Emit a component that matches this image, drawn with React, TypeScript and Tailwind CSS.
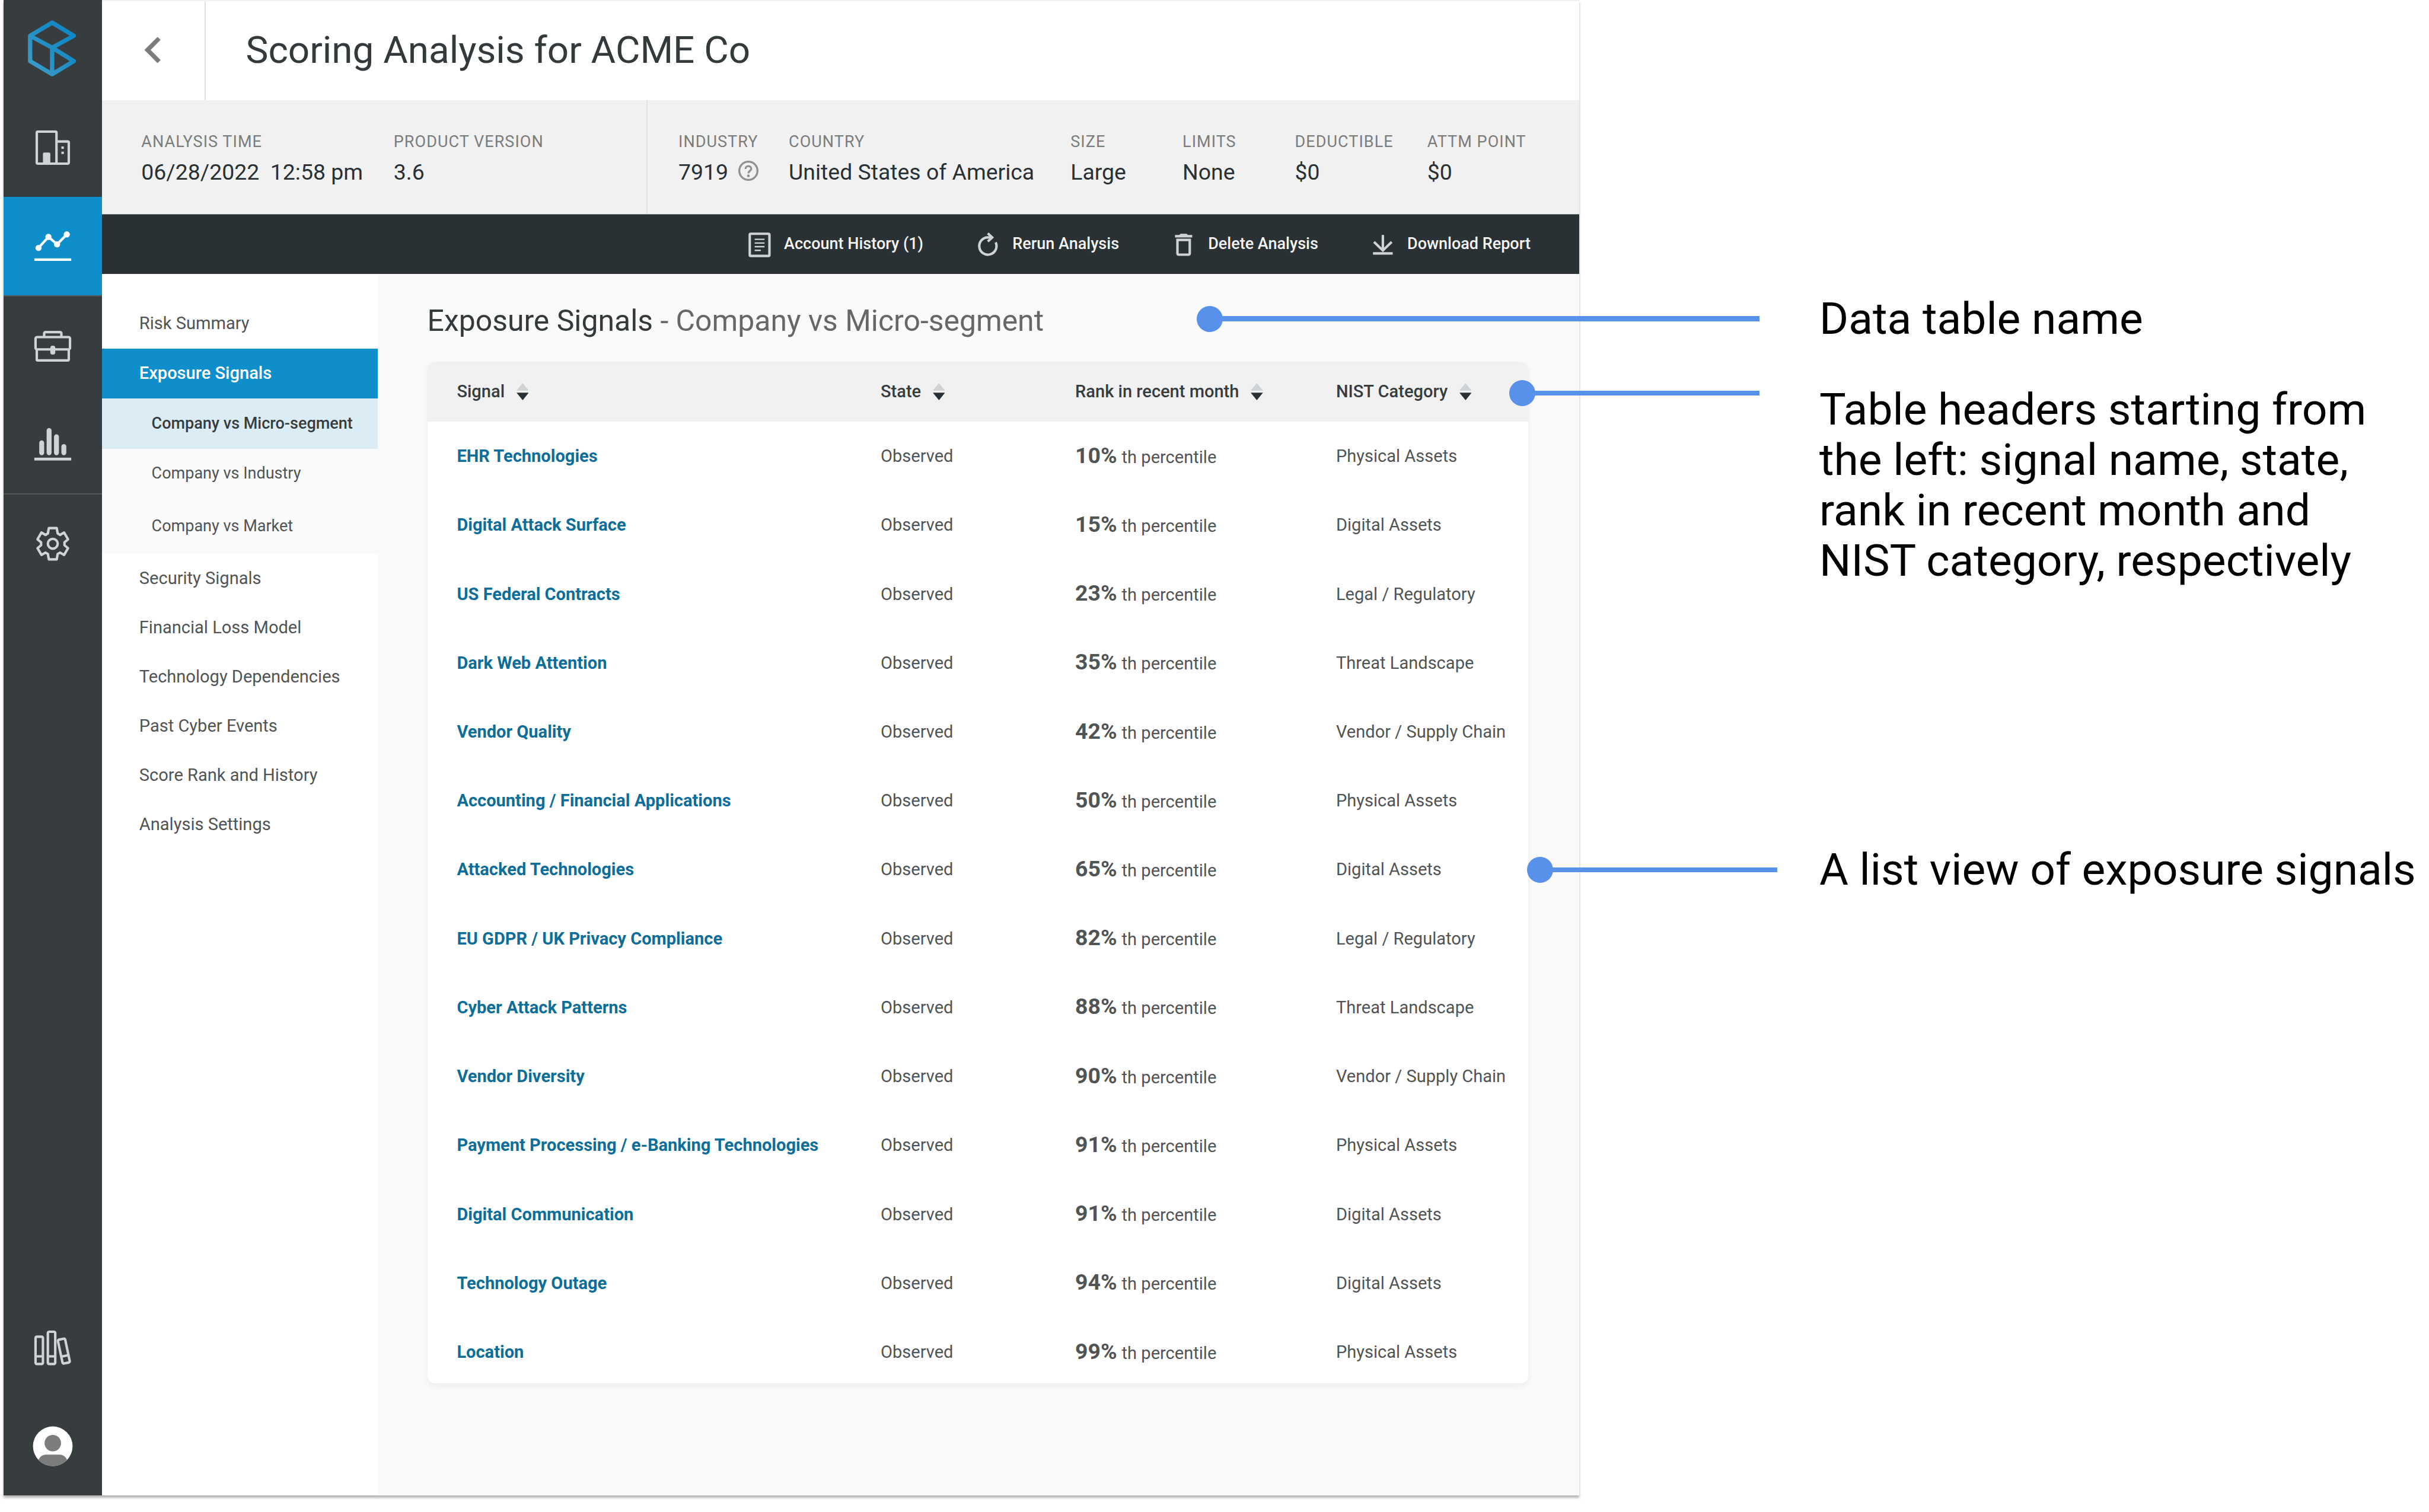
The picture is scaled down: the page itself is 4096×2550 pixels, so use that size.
import type { ReactNode } from "react";

const facts = [
  { label: "INDUSTRY", value: "7919", width: "w-[186.1px]", help: true },
  { label: "COUNTRY", value: "United States of America", width: "w-[475.2px]" },
  { label: "SIZE", value: "Large", width: "w-[188.8px]" },
  { label: "LIMITS", value: "None", width: "w-[189.5px]" },
  { label: "DEDUCTIBLE", value: "$0", width: "w-[223.2px]" },
  { label: "ATTM POINT", value: "$0", width: "w-[200px]" },
];

const signals = [
  ["EHR Technologies", "10%", "Physical Assets"],
  ["Digital Attack Surface", "15%", "Digital Assets"],
  ["US Federal Contracts", "23%", "Legal / Regulatory"],
  ["Dark Web Attention", "35%", "Threat Landscape"],
  ["Vendor Quality", "42%", "Vendor / Supply Chain"],
  ["Accounting / Financial Applications", "50%", "Physical Assets"],
  ["Attacked Technologies", "65%", "Digital Assets"],
  ["EU GDPR / UK Privacy Compliance", "82%", "Legal / Regulatory"],
  ["Cyber Attack Patterns", "88%", "Threat Landscape"],
  ["Vendor Diversity", "90%", "Vendor / Supply Chain"],
  ["Payment Processing / e-Banking Technologies", "91%", "Physical Assets"],
  ["Digital Communication", "91%", "Digital Assets"],
  ["Technology Outage", "94%", "Digital Assets"],
  ["Location", "99%", "Physical Assets"],
];

const moreSections = [
  "Security Signals",
  "Financial Loss Model",
  "Technology Dependencies",
  "Past Cyber Events",
  "Score Rank and History",
  "Analysis Settings",
];

const RailItem = ({ active, children }: { active?: boolean; children: ReactNode }) => (
  <div
    className={`h-[166.06px] shrink-0 ${active ? "bg-[#0e8fcc] text-white" : "text-[#cfd3d6]"}`}
  >
    <svg
      viewBox="0 0 80 80"
      className="w-full h-full"
      fill="none"
      stroke="currentColor"
      strokeWidth="2"
    >
      {children}
    </svg>
  </div>
);

const Rail = () => (
  <nav className="w-[166px] h-full bg-[#373c3f] flex flex-col shrink-0">
    <RailItem>
      <defs>
        <linearGradient id="logo" x1="0" y1="1" x2="1" y2="0">
          <stop offset="0" stopColor="#3f9fc6" />
          <stop offset="0.6" stopColor="#1a8bc4" />
          <stop offset="1" stopColor="#0e86c8" />
        </linearGradient>
      </defs>
      <path
        d="M39.5 38.7 21.6 29.1 39.5 18.4 57.1 29.1 39.5 38.7 57.1 49.7 39.5 60.3 21.6 49.7V29.1M39.5 38.7V60.3"
        stroke="url(#logo)"
        strokeWidth="3.5"
        strokeLinejoin="round"
      />
    </RailItem>
    <RailItem>
      <rect x="27" y="27" width="16" height="26" rx="0.8" />
      <path d="M43 35h9.2a.8.8 0 0 1 .8.8v16.4a.8.8 0 0 1-.8.8H43" />
      <path d="M32 53v-8a1 1 0 0 1 1-1h4a1 1 0 0 1 1 1v8zM47 39h2v2h-2zM47 43.2h2v2h-2z" fill="currentColor" stroke="none" />
    </RailItem>
    <RailItem active>
      <path d="M28.4 41.5 36.5 32.5 43.5 38.6 51.4 30.5" />
      <g fill="currentColor" stroke="none">
        <circle cx="28.4" cy="41.5" r="2.5" />
        <circle cx="36.5" cy="32.5" r="2.5" />
        <circle cx="43.5" cy="38.6" r="2.5" />
        <circle cx="51.4" cy="30.5" r="2.5" />
      </g>
      <path d="M25 51h30" />
    </RailItem>
    <div className="h-[2px] bg-[#555757] shrink-0" />
    <RailItem>
      <path d="M33 33.5V30a1 1 0 0 1 1-1h12a1 1 0 0 1 1 1v3.5" />
      <rect x="26" y="33" width="28" height="10" rx="1.2" />
      <path d="M27 43v8.2a.8.8 0 0 0 .8.8h24.4a.8.8 0 0 0 .8-.8V43" />
      <rect x="38" y="40" width="4" height="7.2" rx="1.8" fill="currentColor" stroke="none" />
    </RailItem>
    <RailItem>
      <g fill="currentColor" stroke="none">
        <rect x="29" y="37" width="4" height="12" rx="2" />
        <rect x="35" y="27" width="4" height="22" rx="2" />
        <rect x="41" y="32" width="4" height="17" rx="2" />
        <rect x="47" y="40" width="4" height="9" rx="2" />
        <rect x="25" y="51" width="30" height="2.3" />
      </g>
    </RailItem>
    <div className="h-[2px] bg-[#555757] shrink-0" />
    <RailItem>
      <path
        d="M36.8 27.3h6.4l.8 4.4 1.9 1.1 3.3-1.9 3.2 5.5-2.9 2.4v2.4l2.9 2.4-3.2 5.5-3.3-1.9-1.9 1.1-.8 4.4h-6.4l-.8-4.4-1.9-1.1-3.3 1.9-3.2-5.5 2.9-2.4v-2.4l-2.9-2.4 3.2-5.5 3.3 1.9 1.9-1.1z"
        strokeLinejoin="round"
      />
      <circle cx="40" cy="40" r="4" />
    </RailItem>
    <div className="flex-1" />
    <RailItem>
      <rect x="26" y="31" width="6" height="22.2" rx="1" />
      <rect x="36" y="27" width="6" height="26.2" rx="1" />
      <path d="M26 47h6M36 47h6" />
      <g transform="rotate(-12 49 42.7)">
        <rect x="46" y="32.8" width="6" height="19.8" rx="1" />
        <path d="M46 46.7h6" />
      </g>
    </RailItem>
    <RailItem>
      <clipPath id="avatar">
        <circle cx="40" cy="40" r="16.1" />
      </clipPath>
      <g clipPath="url(#avatar)" stroke="none">
        <rect x="20" y="20" width="40" height="40" fill="#fff" />
        <circle cx="40" cy="37.5" r="6.7" fill="#7b7d7c" />
        <rect x="28" y="46.9" width="24" height="20" rx="6.5" fill="#7b7d7c" />
      </g>
    </RailItem>
  </nav>
);

const Fact = ({ label, value, width, help }: { label: string; value: string; width: string; help?: boolean }) => (
  <div className={`${width} shrink-0 whitespace-pre`}>
    <div className="text-[27px] leading-[40px] tracking-[1.04px] text-[#7b7d7c]">{label}</div>
    <div className="mt-[6.2px] text-[37.4px] leading-[50px] text-[#293134] flex items-center">
      {value}
      {help && (
        <svg
          viewBox="-8.2 -8.2 16.4 16.4"
          className="ml-[17px] mb-[5px] w-[34px] h-[34px] text-[#8e9190]"
          fill="none"
          stroke="currentColor"
          strokeWidth="1.6"
        >
          <circle r="7.4" />
          <path d="M-2.3 -1.5A2.3 2.3 0 0 1 2.3 -1.5C2.3 .1 0 .1 0 2" />
          <circle cy="4.1" r="1.1" fill="currentColor" stroke="none" />
        </svg>
      )}
    </div>
  </div>
);

const Action = ({ label, children }: { label: string; children: ReactNode }) => (
  <div className="flex items-center gap-[16.6px] text-[27px] leading-[40px] font-medium text-[#f3f3f3] whitespace-nowrap">
    <svg
      viewBox="0 0 24 24"
      className="w-[49.8px] h-[49.8px] text-[#cfd3d5]"
      fill="none"
      stroke="currentColor"
      strokeWidth="2"
    >
      {children}
    </svg>
    <span className="-mt-[3px]">{label}</span>
  </div>
);

const SortHeader = ({ label }: { label: string }) => (
  <div className="flex items-center gap-[19.5px] whitespace-nowrap">
    {label}
    <svg viewBox="0 0 10 14" className="w-[20.8px] h-[29px]">
      <path d="M5 0l5 6.2H0z" fill="#cfd3d5" />
      <path d="M5 14l5-6.2H0z" fill="#293134" />
    </svg>
  </div>
);

const Pointer = ({ className }: { className: string }) => (
  <div className={`absolute flex items-center h-[44px] ${className}`}>
    <div className="w-[44px] h-[44px] rounded-full bg-[#5891e9] shrink-0" />
    <div className="h-[8.7px] flex-1 -ml-[4px] bg-[#5891e9]" />
  </div>
);

const columns = "grid grid-cols-[714.6px_328.1px_439.9px_1fr] items-center pl-[49.8px]";

const SignalTable = () => (
  <div className="w-[1856px] h-[1723.2px] rounded-[12.5px] overflow-hidden bg-white shadow-[0_5px_12px_rgba(0,0,0,0.06)]">
    <div className={`${columns} h-[100.8px] bg-[#f1f1f1] text-[29.06px] font-medium text-[#373c3f]`}>
      <SortHeader label="Signal" />
      <SortHeader label="State" />
      <SortHeader label="Rank in recent month" />
      <SortHeader label="NIST Category" />
    </div>
    {signals.map(([name, rank, category]) => (
      <div
        key={name}
        className={`${columns} h-[116.24px] text-[29.06px] leading-[44px] text-[#515454] whitespace-nowrap`}
      >
        <div className="font-bold text-[#0d6e99]">{name}</div>
        <div>Observed</div>
        <div className="flex items-baseline gap-[8px]">
          <span className="text-[37.4px] font-bold">{rank}</span>
          <span>th percentile</span>
        </div>
        <div>{category}</div>
      </div>
    ))}
  </div>
);

const SideNav = () => (
  <div className="w-[465.4px] shrink-0 bg-white text-[29.06px] text-[#515454] whitespace-nowrap">
    <div className="h-[125.5px] pt-[39.5px] pl-[62.8px] leading-[86px]">Risk Summary</div>
    <div className="h-[84.2px] pl-[62.8px] leading-[82.5px] bg-[#0e8fcc] text-white font-medium">
      Exposure Signals
    </div>
    <div className="bg-[#fafafa] text-[27px]">
      <div className="h-[84.5px] pl-[83.6px] leading-[84px] bg-[#dcecf5] text-[#373c3f] font-medium">
        Company vs Micro-segment
      </div>
      <div className="h-[83.8px] pl-[83.6px] leading-[83px]">Company vs Industry</div>
      <div className="h-[93.4px] pl-[83.6px] leading-[94.4px]">Company vs Market</div>
    </div>
    {moreSections.map((s) => (
      <div key={s} className="h-[83.03px] pl-[62.8px] leading-[82px]">
        {s}
      </div>
    ))}
  </div>
);

const App = () => {
  return (
    <div className="relative w-[4096px] h-[2550px] overflow-hidden bg-white pl-[6px] flex items-start font-['Roboto',sans-serif]">
      <div className="w-[2657.4px] h-[2522.4px] flex shrink-0 bg-[#fafafa] shadow-[0_4px_4px_rgba(0,0,0,0.3)]">
        <Rail />
        <div className="flex-1 flex flex-col">
          <div className="h-[168.6px] bg-white flex items-center border-t-2 border-[#f1f1f1]">
            <div className="w-[175px] h-full border-r-2 border-[#d9e3e6] flex items-center pl-[42.4px]">
              <svg viewBox="0 0 24 24" className="w-[88.5px] h-[88.5px] -mt-[2px]">
                <path d="M15.41 7.41L14 6l-6 6 6 6 1.41-1.41L10.83 12z" fill="#7b7d7c" />
              </svg>
            </div>
            <h1 className="pl-[67.5px] -mt-px text-[63.8px] leading-[80px] text-[#343a3c]">
              Scoring Analysis for ACME Co
            </h1>
          </div>

          <div className="h-[192.9px] flex bg-[#f1f1f1]">
            <div className="w-[918px] shrink-0 flex pl-[66.3px] pt-[50.6px]">
              <Fact label="ANALYSIS TIME" value="06/28/2022  12:58 pm" width="w-[425.5px]" />
              <Fact label="PRODUCT VERSION" value="3.6" width="w-[300px]" />
            </div>
            <div className="flex-1 flex pl-[52px] pt-[50.6px] border-l-2 border-[#dbe3e5]">
              {facts.map((f) => (
                <Fact key={f.label} {...f} />
              ))}
            </div>
          </div>

          <div className="h-[100.9px] bg-[#293134] border-t border-[#777b7b] flex items-center justify-end gap-[83.8px] pr-[82.5px]">
            <Action label="Account History (1)">
              <rect x="4" y="3" width="16" height="18" rx="0.8" />
              <path d="M8 7.5h8M8 10.5h8M8 13.5h8M8 16.5h5" strokeWidth="1.1" />
            </Action>
            <Action label="Rerun Analysis">
              <path d="M15 6H12A7 7 0 1 0 18.3 10" />
              <path d="M11.9 2.6 15.5 6 11.9 9.3" />
            </Action>
            <Action label="Delete Analysis">
              <path
                d="M6 19c0 1.1.9 2 2 2h8c1.1 0 2-.9 2-2V7H6v12zM8 9h8v10H8V9zm7.5-5l-1-1h-5l-1 1H5v2h14V4z"
                fill="currentColor"
                stroke="none"
              />
            </Action>
            <Action label="Download Report">
              <path d="M12 4V16.5M4.8 9.6 12 16.6 19.2 9.6M4 19h16" />
            </Action>
          </div>

          <div className="flex-1 flex">
            <SideNav />
            <div className="pl-[83.2px] pt-[48.8px]">
              <h2 className="h-[99px] text-[49.9px] leading-[60px] text-[#666868] whitespace-nowrap">
                <span className="text-[#343a3c]">Exposure Signals</span> - Company vs Micro-segment
              </h2>
              <SignalTable />
            </div>
          </div>
        </div>
      </div>

      <div className="pl-[404.6px] pt-[494.8px] text-[75px] leading-[84.75px] text-black whitespace-nowrap">
        <p>Data table name</p>
        <p className="mt-[68.9px]">
          Table headers starting from
          <br />
          the left: signal name, state,
          <br />
          rank in recent month and
          <br />
          NIST category, respectively
        </p>
        <p className="mt-[436.6px]">A list view of exposure signals</p>
      </div>

      <Pointer className="left-[2018px] top-[515.5px] w-[949px]" />
      <Pointer className="left-[2544.5px] top-[641px] w-[422.5px]" />
      <Pointer className="left-[2574.5px] top-[1445px] w-[422px]" />
    </div>
  );
};

export default App;
